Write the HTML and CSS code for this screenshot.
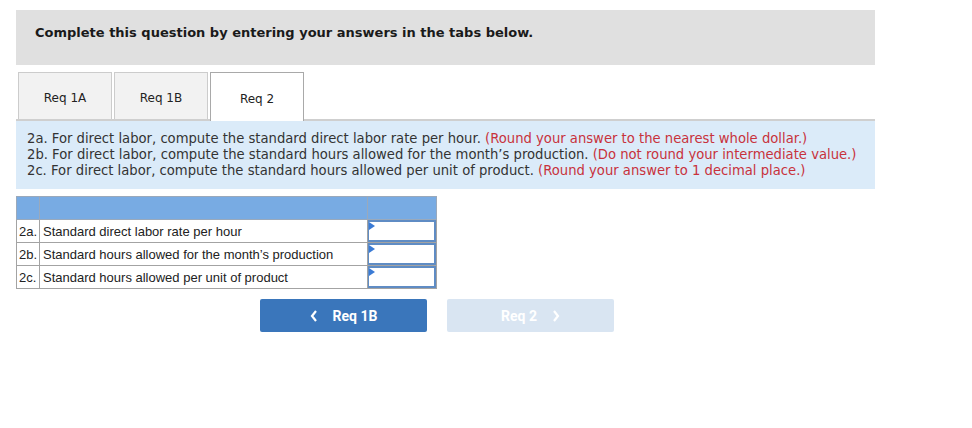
FILE: index.html
```html
<!DOCTYPE html>
<html>
<head>
<meta charset="utf-8">
<link rel="stylesheet" href="styles.css">
</head>
<body>
<div class="page">
  <div class="banner">Complete this question by entering your answers in the tabs below.</div>
  <div class="tabs">
    <div class="tab">Req 1A</div>
    <div class="tab">Req 1B</div>
    <div class="tab active">Req 2</div>
  </div>
  <div class="instructions">
    <div>2a. For direct labor, compute the standard direct labor rate per hour. <span class="red">(Round your answer to the nearest whole dollar.)</span></div>
    <div>2b. For direct labor, compute the standard hours allowed for the month’s production. <span class="red">(Do not round your intermediate value.)</span></div>
    <div>2c. For direct labor, compute the standard hours allowed per unit of product. <span class="red">(Round your answer to 1 decimal place.)</span></div>
  </div>
  <table class="grid">
    <tr class="head"><td class="c1"></td><td class="c2"></td><td class="c3"></td></tr>
    <tr><td class="c1">2a.</td><td class="c2">Standard direct labor rate per hour</td><td class="c3"><div class="input"></div></td></tr>
    <tr><td class="c1">2b.</td><td class="c2">Standard hours allowed for the month’s production</td><td class="c3"><div class="input"></div></td></tr>
    <tr><td class="c1">2c.</td><td class="c2">Standard hours allowed per unit of product</td><td class="c3"><div class="input"></div></td></tr>
  </table>
  <div class="nav">
    <div class="btn prev"><svg class="chev" width="8" height="12" viewBox="0 0 8 12"><polyline points="6,1 2,6 6,11" fill="none" stroke="#fff" stroke-width="2.2"/></svg>Req 1B</div>
    <div class="btn next">Req 2<svg class="chev after" width="8" height="12" viewBox="0 0 8 12"><polyline points="2,1 6,6 2,11" fill="none" stroke="#fff" stroke-width="2.2"/></svg></div>
  </div>
</div>
</body>
</html>
```
FILE: styles.css
```css
html, body { margin: 0; padding: 0; background: #fff; }
.page { padding: 10px 0 0 16px; width: 859px; font-family: "DejaVu Sans", Verdana, sans-serif; color: #222; }
.banner { height: 55px; box-sizing: border-box; background: #e0e0e0; padding: 15px 0 0 19px; font-weight: bold; font-size: 13px; line-height: 16px; color: #1a1a1a; }
.tabs { margin-top: 7px; display: flex; gap: 2px; padding-left: 2px; border-bottom: 2px solid #cfcfcf; height: 47px; }
.tab { width: 92px; height: 43px; padding-top: 3px; box-sizing: content-box; background: #f2f2f2; border: 1px solid #cccccc; border-bottom: none; display: flex; align-items: center; justify-content: center; font-size: 12px; line-height: 14px; color: #222; }
.tab.active { background: #fff; border-color: #a9a9a9; height: 45px; padding-top: 3px; position: relative; z-index: 1; }
.instructions { height: 68px; box-sizing: border-box; padding: 10px 0 0 11px; background: #dbebf9; font-size: 13.18px; line-height: 16px; color: #333; }
.red { color: #c8323c; }
.grid { margin-top: 7px; border-collapse: collapse; width: 421px; font-family: "Liberation Sans", Arial, sans-serif; font-size: 13px; color: #222; }
.grid td { border: 1px solid #a3a3a3; height: 22px; padding: 0; }
.grid .c1 { width: 20px; padding-left: 2px; }
.grid .c2 { width: 325px; padding-left: 3px; }
.grid .c3 { width: 68px; }
.grid tr.head td { background: #78abe3; height: 22px; border-color: #9aa9bb; }
.input { position: relative; height: 18px; border: 2px solid #5f8cc4; border-left-width: 1px; background: #fff; }
.input::before { content: ""; position: absolute; left: 0; top: 0; border-left: 6px solid #3a7bd5; border-top: 4px solid transparent; border-bottom: 4px solid transparent; }
.nav { display: flex; gap: 20px; margin: 10px 0 0 244px; }
.btn { width: 167px; height: 33px; border-radius: 2px; display: flex; align-items: center; justify-content: center; font-family: Roboto, "Liberation Sans", sans-serif; font-weight: bold; font-size: 14px; color: #fff; }
.btn.prev { background: #3a76bb; }
.btn.next { background: #d9e5f2; }
.chev { margin-right: 15px; }
.chev.after { margin: 0 0 0 15px; }
```
